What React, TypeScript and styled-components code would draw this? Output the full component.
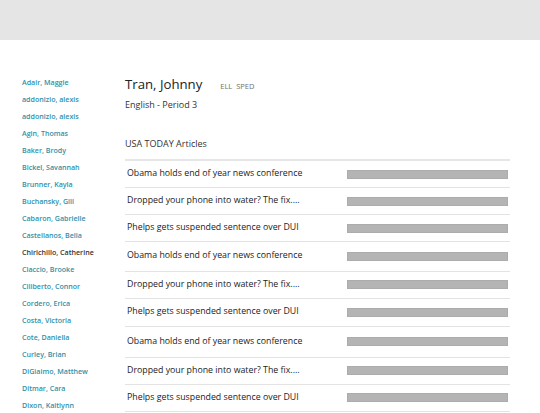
import React from "react";
import styled, { createGlobalStyle } from "styled-components";

const Global = createGlobalStyle`
  html, body { margin: 0; padding: 0; background: #fff; }
  body { font-family: "Open Sans", "Liberation Sans", sans-serif; }
`;

const TopBar = styled.header`
  height: 40px;
  background: #e5e5e5;
`;

const Main = styled.div`
  display: flex;
  align-items: flex-start;
`;

const Sidebar = styled.nav`
  width: 103px;
  padding: 34px 0 0 22px;
  display: flex;
  flex-direction: column;
`;

const StudentLink = styled.a<{ $active?: boolean }>`
  display: block;
  font-size: 7.1px;
  font-weight: 600;
  line-height: 17px;
  height: 17px;
  white-space: nowrap;
  color: ${(p) => (p.$active ? "#333" : "#2f91a8")};
  text-decoration: none;
`;

const Content = styled.section`
  width: 385px;
  padding-top: 34px;
`;

const TitleRow = styled.div`
  display: flex;
  align-items: baseline;
  gap: 18px;
`;

const Name = styled.h1`
  margin: 0;
  font-size: 13.2px;
  font-weight: 400;
  line-height: 20px;
  color: #222;
`;

const Tags = styled.span`
  font-size: 7.5px;
  color: #707070;
  word-spacing: 2px;
`;

const Period = styled.div`
  margin-top: 4px;
  font-size: 9px;
  line-height: 14px;
  color: #333;
`;

const SectionTitle = styled.h2`
  margin: 25px 0 0;
  font-size: 9px;
  font-weight: 400;
  line-height: 14px;
  color: #333;
`;

const Table = styled.div`
  margin-top: 8px;
  border-top: 2px solid #e6e6e6;
`;

const Row = styled.div<{ $h: number }>`
  display: grid;
  grid-template-columns: 222px 161px;
  align-items: center;
  height: ${(p) => p.$h}px;
  padding-bottom: 2px;
  border-bottom: 1px solid #e3e3e3;
  box-sizing: border-box;
`;

const Headline = styled.span`
  padding-left: 2px;
  font-size: 8.8px;
  color: #222;
  white-space: nowrap;
`;

const Bar = styled.div`
  height: 9px;
  margin-top: 2px;
  background: #b4b4b4;
  box-sizing: border-box;
  border: 1px solid #acacac;
`;

const students = [
  "Adair, Maggie",
  "addonizio, alexis",
  "addonizio, alexis",
  "Agin, Thomas",
  "Baker, Brody",
  "Bickel, Savannah",
  "Brunner, Kayla",
  "Buchansky, Gill",
  "Cabaron, Gabrielle",
  "Castellanos, Bella",
  "Chirichillo, Catherine",
  "Ciaccio, Brooke",
  "Ciliberto, Connor",
  "Cordero, Erica",
  "Costa, Victoria",
  "Cote, Daniella",
  "Curley, Brian",
  "DiGiaimo, Matthew",
  "Ditmar, Cara",
  "Dixon, Kaitlynn",
];

const headlines = [
  "Obama holds end of year news conference",
  "Dropped your phone into water? The fix....",
  "Phelps gets suspended sentence over DUI",
];

const heights = [27, 27, 27, 29.5, 27.5, 27.5, 31, 27, 27];

export default function App() {
  return (
    <>
      <Global />
      <TopBar />
      <Main>
        <Sidebar>
          {students.map((s, i) => (
            <StudentLink key={i} href="#" $active={s === "Chirichillo, Catherine"}>
              {s}
            </StudentLink>
          ))}
        </Sidebar>
        <Content>
          <TitleRow>
            <Name>Tran, Johnny</Name>
            <Tags>ELL SPED</Tags>
          </TitleRow>
          <Period>English - Period 3</Period>
          <SectionTitle>USA TODAY Articles</SectionTitle>
          <Table>
            {heights.map((h, i) => (
              <Row key={i} $h={h}>
                <Headline>{headlines[i % 3]}</Headline>
                <Bar />
              </Row>
            ))}
          </Table>
        </Content>
      </Main>
    </>
  );
}
